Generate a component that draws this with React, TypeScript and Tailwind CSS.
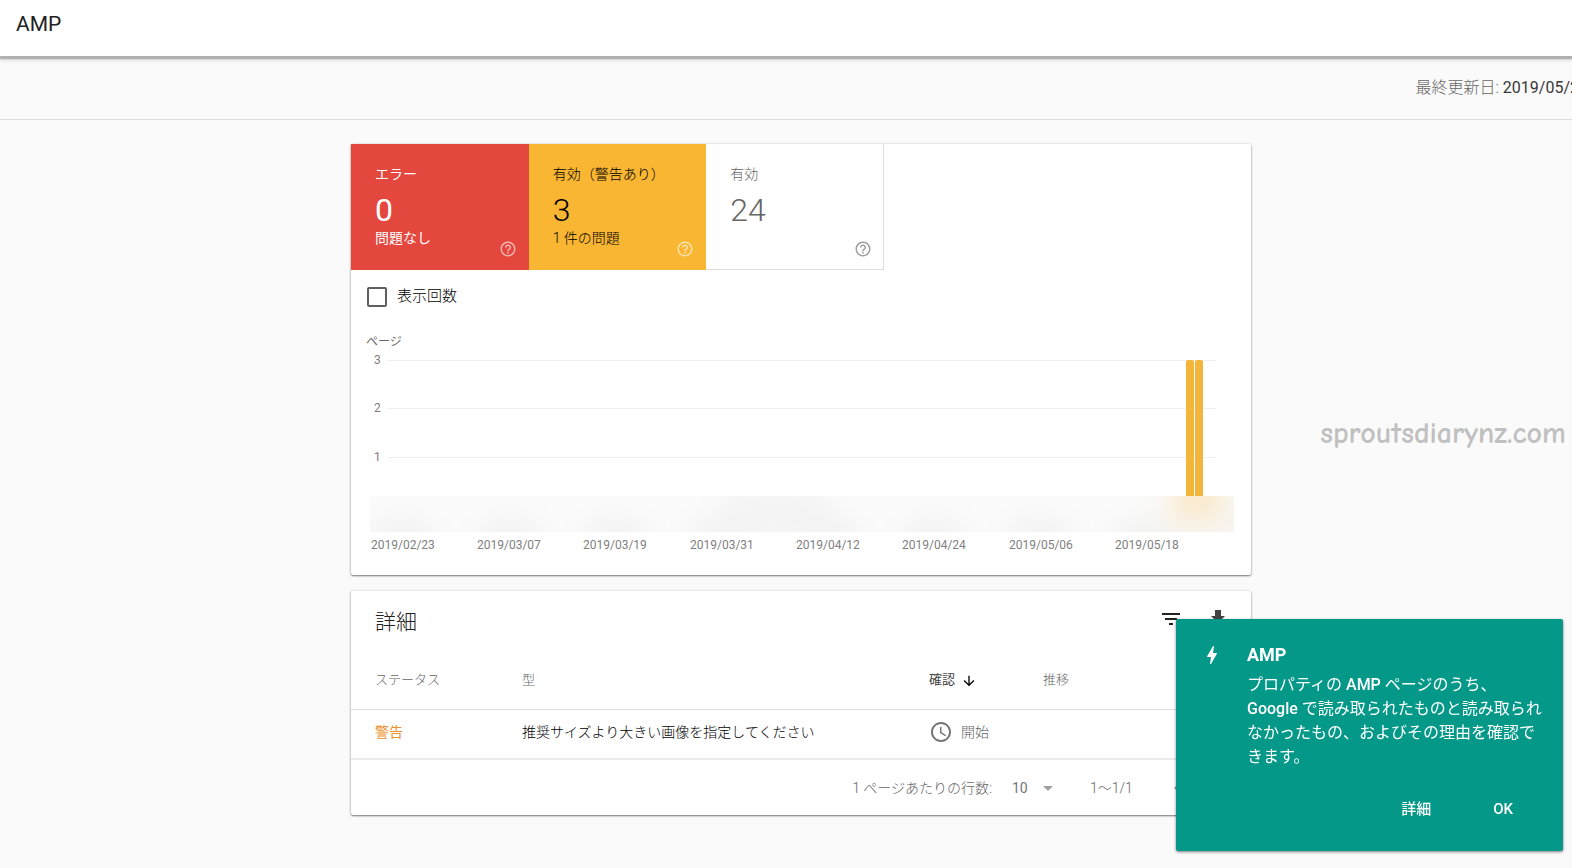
import { useState } from 'react';
import { MdArrowDownward, MdArrowDropDown, MdBolt, MdChevronLeft, MdChevronRight, MdFileDownload, MdFilterList, MdHelpOutline, MdSchedule } from 'react-icons/md';

const STATUS_TILES = [
  { label: 'エラー', count: 0, note: '問題なし', tile: 'bg-[#e4473e] text-white', weight: 'font-normal', icon: 'text-white/60' },
  { label: '有効（警告あり）', count: 3, note: '1 件の問題', tile: 'bg-[#f8b633] text-black', weight: 'font-light', icon: 'text-white/60' },
  { label: '有効', count: 24, note: '', tile: 'bg-white text-[#666666] shadow-[inset_-1px_-1px_0_#dcdcdc]', weight: 'font-light', icon: 'text-[#9e9e9e]' },
];

const DATES = ['2019/02/23', '2019/03/07', '2019/03/19', '2019/03/31', '2019/04/12', '2019/04/24', '2019/05/06', '2019/05/18'];

const GRID_LINES = [
  { value: 3, y: 36 },
  { value: 2, y: 84 },
  { value: 1, y: 133 },
];

const CARD = 'bg-white rounded-xs shadow-[0_1px_2px_rgba(0,0,0,0.5),0_0_3px_rgba(0,0,0,0.12)]';

export default function App() {
  const [showToast, setShowToast] = useState(true);

  return (
    <div className="min-h-screen overflow-hidden bg-[#fafafa] text-sm text-[#212121] font-[Roboto,'Noto_Sans_CJK_JP',sans-serif]">
      <header className="relative h-14 bg-white px-4 py-2.5 shadow-[0_3px_1px_rgba(0,0,0,0.22),0_5px_3px_rgba(0,0,0,0.1)]">
        <h1 className="text-[21px] leading-7">AMP</h1>
      </header>

      <div className="flex h-16 items-center justify-end border-b border-[#dedede] text-base text-[#383838]">
        <p className="-mr-[7px] whitespace-nowrap">
          <span className="font-light text-[#666666]">最終更新日: </span>2019/05/2
        </p>
      </div>

      <main className="pt-6 pb-10 pl-[30px]">
        <div className="mx-auto flex max-w-[900px] flex-col gap-4">
          <section className={CARD}>
            <div className="grid w-[533px] grid-cols-3">
              {STATUS_TILES.map((s) => (
                <div key={s.label} className={`relative h-[126px] px-6 pt-5 ${s.tile}`}>
                  <p className={`leading-5 whitespace-nowrap ${s.weight}`}>{s.label}</p>
                  <p className={`mt-2 text-[32px] leading-9 ${s.weight}`}>{s.count}</p>
                  <p className={`leading-5 ${s.weight}`}>{s.note}</p>
                  <button aria-label="ヘルプ" className={`absolute right-3 bottom-3 ${s.icon}`}>
                    <MdHelpOutline className="size-[18px]" />
                  </button>
                </div>
              ))}
            </div>

            <label className="flex h-[54px] items-center gap-2.5 px-4 text-[15px] font-light text-black">
              <input type="checkbox" className="size-5 appearance-none rounded-xs border-2 border-[#5f5f5f] checked:bg-[#5f5f5f]" />
              表示回数
            </label>

            <Chart />
          </section>

          <section className={CARD}>
            <div className="flex h-[62px] items-center justify-between pr-[21px] pl-6">
              <h2 className="text-[21px] font-light">詳細</h2>
              <div className="flex gap-[23px] pb-1.5">
                <button aria-label="フィルタ"><MdFilterList className="size-6" /></button>
                <button aria-label="ダウンロード"><MdFileDownload className="size-6 text-[#424242]" /></button>
              </div>
            </div>

            <table className="w-full table-fixed text-left">
              <thead>
                <tr className="h-14 border-b border-[#dedede] text-[13px] text-[#666666]">
                  <th className="w-[171px] pl-6 font-light">ステータス</th>
                  <th className="font-light">型</th>
                  <th className="w-[114px] font-normal text-[#424242]">
                    <button className="flex items-center gap-1.5">
                      確認 <MdArrowDownward className="size-4 text-black" />
                    </button>
                  </th>
                  <th className="w-[208px] font-light">推移</th>
                </tr>
              </thead>
              <tbody>
                <tr className="h-[50px] border-b-2 border-[#ebebeb]">
                  <td className="pb-1 pl-6 text-[#e8912d]">警告</td>
                  <td className="pb-1 font-light text-black">推奨サイズより大きい画像を指定してください</td>
                  <td className="pb-1 font-light text-[#616161]">
                    <span className="flex items-center gap-2">
                      <MdSchedule className="size-6 text-[#757575]" />開始
                    </span>
                  </td>
                  <td />
                </tr>
              </tbody>
            </table>

            <div className="flex h-[55px] items-center justify-end pr-[21px] text-[#757575]">
              <label htmlFor="rows" className="font-light text-[#666666]">1 ページあたりの行数:</label>
              <div className="relative ml-5">
                <select id="rows" className="w-12 appearance-none bg-transparent">
                  <option>10</option>
                  <option>25</option>
                </select>
                <MdArrowDropDown className="pointer-events-none absolute -top-0.5 right-0 size-6 text-[#9e9e9e]" />
              </div>
              <span className="ml-[30px] w-[76px] font-light text-[#666666]">1〜1/1</span>
              <button aria-label="前へ"><MdChevronLeft className="size-6 text-[#9e9e9e]" /></button>
              <button aria-label="次へ" className="ml-4"><MdChevronRight className="size-6 text-[#9e9e9e]" /></button>
            </div>
          </section>
        </div>
      </main>

      <p className="absolute top-[416px] right-1.5 text-[30px] leading-9 font-bold text-[#c0c0c0] font-['Comic_Sans_MS','Comic_Neue','Open_Sans',sans-serif]">
        sproutsdiarynz.com
      </p>

      {showToast && <Toast onClose={() => setShowToast(false)} />}
    </div>
  );
}

function Chart() {
  return (
    <svg viewBox="0 0 900 251" className="block w-full text-xs" fill="#808080" role="img" aria-label="ページ">
      <defs>
        <clipPath id="band">
          <rect x="19" y="172" width="864" height="36" />
        </clipPath>
        <filter id="soft" x="-50%" y="-100%" width="200%" height="300%">
          <feGaussianBlur stdDeviation="14" />
        </filter>
      </defs>

      <text x="15" y="22" fill="#666666">ページ</text>
      {GRID_LINES.map((g) => (
        <g key={g.value}>
          <text x="23" y={g.y + 4}>{g.value}</text>
          <rect x="37" y={g.y} width="828" height="1" fill="#eeeeee" />
        </g>
      ))}

      {/* bars for the last two days */}
      <path d="M835 172V38q0-2 2-2h4q2 0 2 2v134zM844 172V38q0-2 2-2h4q2 0 2 2v134z" fill="#f3b53a" />

      {/* hazy strip along the baseline */}
      <g clipPath="url(#band)">
        <rect x="19" y="172" width="864" height="36" fill="#fbfbfb" />
        <g filter="url(#soft)">
          {DATES.map((d, i) => (
            <rect key={d} x={22 + i * 106} y="200" width="60" height="22" fill="#eeeeee" />
          ))}
          <rect x="372" y="168" width="108" height="44" fill="#f3f3f3" />
          <rect x="812" y="172" width="80" height="50" fill="#f7f3ec" />
          <rect x="824" y="152" width="44" height="40" fill="#fbe8c4" />
        </g>
      </g>

      {DATES.map((d, i) => (
        <text key={d} x={20 + i * 106 + Math.floor(i / 3)} y="225">{d}</text>
      ))}
    </svg>
  );
}

function Toast({ onClose }: { onClose: () => void }) {
  return (
    <div className="fixed right-[9px] bottom-[17px] w-[387px] rounded-xs bg-[#049888] pt-[22px] pr-4 pb-[30px] pl-6 text-white shadow-[0_1px_3px_rgba(0,0,0,0.5)]">
      <div className="flex gap-[23px]">
        <MdBolt className="mt-0.5 size-6 shrink-0" />
        <div>
          <h3 className="text-lg leading-7 font-bold">AMP</h3>
          <p className="mt-1 text-base leading-6">
            プロパティの <b className="font-medium">AMP</b> ページのうち、<b className="font-medium">Google</b> で読み取られたものと読み取られなかったもの、およびその理由を確認できます。
          </p>
        </div>
      </div>
      <div className="mt-7 flex justify-end gap-[62px] pr-[34px] text-[15px] leading-6 font-medium">
        <button>詳細</button>
        <button onClick={onClose}>OK</button>
      </div>
    </div>
  );
}
